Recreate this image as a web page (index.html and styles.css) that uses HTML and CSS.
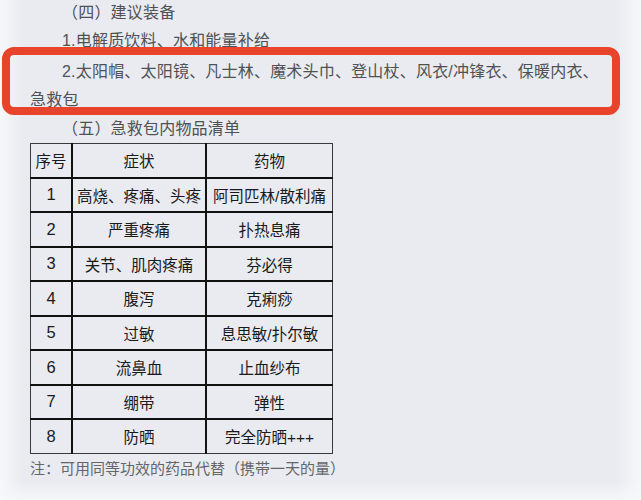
FILE: index.html
```html
<!DOCTYPE html>
<html lang="zh">
<head>
<meta charset="utf-8">
<link rel="stylesheet" href="styles.css">
</head>
<body>
<div class="page">
  <div class="doc">
    <p class="line title">（四）建议装备</p>
    <p class="line item1">1.电解质饮料、水和能量补给</p>
    <p class="line item2">2.太阳帽、太阳镜、凡士林、魔术头巾、登山杖、风衣/冲锋衣、保暖内衣、急救包</p>
    <p class="line sub">（五）急救包内物品清单</p>
    <table class="kit">
      <tr><th class="c1">序号</th><th class="c2">症状</th><th class="c3">药物</th></tr>
      <tr><td>1</td><td>高烧、疼痛、头疼</td><td>阿司匹林/散利痛</td></tr>
      <tr><td>2</td><td>严重疼痛</td><td>扑热息痛</td></tr>
      <tr><td>3</td><td>关节、肌肉疼痛</td><td>芬必得</td></tr>
      <tr><td>4</td><td>腹泻</td><td>克痢痧</td></tr>
      <tr><td>5</td><td>过敏</td><td>息思敏/扑尔敏</td></tr>
      <tr><td>6</td><td>流鼻血</td><td>止血纱布</td></tr>
      <tr><td>7</td><td>绷带</td><td>弹性</td></tr>
      <tr><td>8</td><td>防晒</td><td>完全防晒+++</td></tr>
    </table>
    <p class="note">注：可用同等功效的药品代替（携带一天的量）</p>
  </div>
  <div class="mark"></div>
</div>
</body>
</html>
```
FILE: styles.css
```css
html, body {
  margin: 0;
  padding: 0;
}
body {
  width: 641px;
  height: 500px;
  overflow: hidden;
  background-color: #e9ebf0;
  font-family: "Liberation Sans", "Noto Sans CJK SC", sans-serif;
}
.page {
  position: relative;
  width: 641px;
  height: 500px;
  background:
    linear-gradient(to right, rgba(247,248,250,0.95) 0px, rgba(247,248,250,0) 24px),
    linear-gradient(to left, rgba(247,248,250,0.95) 0px, rgba(247,248,250,0) 26px),
    linear-gradient(to top, rgba(247,248,250,0.9) 0px, rgba(247,248,250,0) 18px),
    #e9ebf0;
}
.doc {
  padding-left: 30px;
  padding-top: 1px;
  width: 582px;
}
.line {
  margin: 0;
  font-size: 16px;
  line-height: 28px;
  color: #505154;
  text-indent: 32px;
  letter-spacing: 0.2px;
}
.title {
  line-height: 24px;
  margin-bottom: 2px;
}
.item2 {
  margin-top: 3px;
  margin-bottom: 1px;
}
.sub {
  margin-bottom: -1px;
}
.kit {
  border-collapse: collapse;
  margin-top: 1px;
  color: #1a1a1b;
  font-size: 15.5px;
}
.kit th, .kit td {
  border: 2px solid #111;
  height: 32.5px;
  padding: 0;
  text-align: center;
  font-weight: normal;
  vertical-align: middle;
}
.kit td:first-child {
  font-size: 16.5px;
}
.kit tr:first-child th { border-top: 1px solid #3a3a3a; }
.kit tr:last-child td { border-bottom: 1px solid #3a3a3a; }
.kit th:first-child, .kit td:first-child { border-left: 1px solid #3a3a3a; }
.kit th:last-child, .kit td:last-child { border-right: 1px solid #3a3a3a; }
.c1 { width: 40px; }
.c2 { width: 132px; }
.c3 { width: 125px; }
.note {
  margin: 1px 0 0;
  font-size: 15px;
  line-height: 28px;
  color: #65666a;
}
.mark {
  position: absolute;
  left: 2px;
  top: 47px;
  width: 618px;
  height: 68px;
  box-sizing: border-box;
  border: 8px solid #e8432b;
  border-radius: 12px;
}
```
